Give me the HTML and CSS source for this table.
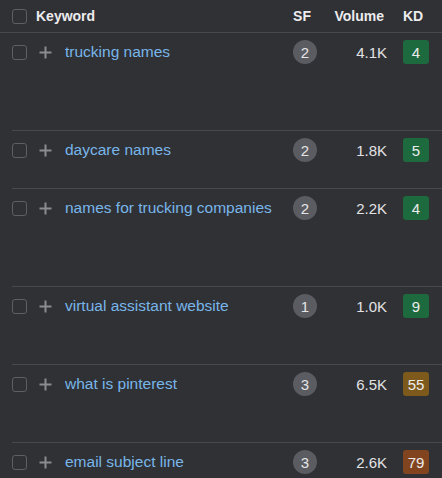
FILE: index.html
```html
<!DOCTYPE html>
<html lang="en">
<head>
<meta charset="utf-8">
<link rel="stylesheet" href="styles.css">
</head>
<body>
<div class="table">
  <div class="head">
    <span class="cb"></span>
    <span class="h-kw">Keyword</span>
    <span class="h-sf">SF</span>
    <span class="h-vol">Volume</span>
    <span class="h-kd">KD</span>
  </div>

  <div class="row row--first">
    <span class="cb"></span>
    <svg class="plus" viewBox="0 0 13 13"><path d="M6.5 0.5v12M0.5 6.5h12"/></svg>
    <a class="kw">trucking names</a>
    <span class="sf">2</span>
    <span class="vol">4.1K</span>
    <span class="kd kd--easy">4</span>
  </div>

  <div class="row row--short">
    <span class="cb"></span>
    <svg class="plus" viewBox="0 0 13 13"><path d="M6.5 0.5v12M0.5 6.5h12"/></svg>
    <a class="kw">daycare names</a>
    <span class="sf">2</span>
    <span class="vol">1.8K</span>
    <span class="kd kd--easy">5</span>
  </div>

  <div class="row row--tall">
    <span class="cb"></span>
    <svg class="plus" viewBox="0 0 13 13"><path d="M6.5 0.5v12M0.5 6.5h12"/></svg>
    <a class="kw">names for trucking companies</a>
    <span class="sf">2</span>
    <span class="vol">2.2K</span>
    <span class="kd kd--easy">4</span>
  </div>

  <div class="row row--mid">
    <span class="cb"></span>
    <svg class="plus" viewBox="0 0 13 13"><path d="M6.5 0.5v12M0.5 6.5h12"/></svg>
    <a class="kw">virtual assistant website</a>
    <span class="sf">1</span>
    <span class="vol">1.0K</span>
    <span class="kd kd--easy">9</span>
  </div>

  <div class="row row--mid">
    <span class="cb"></span>
    <svg class="plus" viewBox="0 0 13 13"><path d="M6.5 0.5v12M0.5 6.5h12"/></svg>
    <a class="kw">what is pinterest</a>
    <span class="sf">3</span>
    <span class="vol">6.5K</span>
    <span class="kd kd--hard">55</span>
  </div>

  <div class="row row--mid">
    <span class="cb"></span>
    <svg class="plus" viewBox="0 0 13 13"><path d="M6.5 0.5v12M0.5 6.5h12"/></svg>
    <a class="kw">email subject line</a>
    <span class="sf">3</span>
    <span class="vol">2.6K</span>
    <span class="kd kd--super">79</span>
  </div>
</div>
</body>
</html>
```

FILE: styles.css
```css
html, body {
  margin: 0;
  padding: 0;
  background: #303135;
  height: 100%;
  overflow: hidden;
}

body {
  font-family: "Liberation Sans", Arial, sans-serif;
  font-size: 15px;
  color: #e2e2e4;
}

.table {
  display: flex;
  flex-direction: column;
}

.head {
  display: grid;
  grid-template-columns: 15px 1fr 24px 58px 30px;
  column-gap: 12px;
  align-items: center;
  height: 32px;
  padding: 0 13px 0 12px;
  border-bottom: 1px solid #48494d;
  font-size: 14px;
  font-weight: bold;
  color: #ececee;
}

.h-kw {
  margin-left: -3px;
}

.h-sf {
  text-align: center;
  margin-left: -9px;
  margin-right: -3px;
}

.h-vol {
  text-align: right;
  margin-right: 3px;
}

.h-kd {
  justify-self: end;
  width: 26px;
  box-sizing: border-box;
}

.row {
  display: grid;
  grid-template-columns: 15px 13px 1fr 24px 58px 30px;
  column-gap: 12px;
  align-items: center;
  align-content: start;
  grid-auto-rows: 24px;
  margin-left: 12px;
  padding: 7px 13px 0 0;
  box-sizing: border-box;
  flex: none;
}

.row + .row {
  border-top: 1px solid #48494d;
}

.row--first { height: 97px; }
.row--tall { height: 98px; }
.row--short { height: 58px; }
.row--mid { height: 78px; }

.cb {
  width: 15px;
  height: 15px;
  box-sizing: border-box;
  border: 1px solid #5e5f64;
  border-radius: 3px;
  margin-top: 1px;
}

.head .cb {
  margin-top: 0;
}

.plus {
  width: 13px;
  height: 13px;
  stroke: #8b8c90;
  stroke-width: 2;
  fill: none;
}

.kw {
  color: #78b6ea;
  font-size: 15.5px;
  padding-left: 1px;
  white-space: nowrap;
  cursor: pointer;
}

.sf {
  width: 24px;
  height: 24px;
  border-radius: 50%;
  background: #5b5c61;
  color: #e4e4e6;
  display: flex;
  align-items: center;
  justify-content: center;
  font-size: 15px;
}

.vol {
  text-align: right;
  color: #e2e2e4;
}

.kd {
  justify-self: end;
  width: 26px;
  height: 24px;
  border-radius: 3px;
  display: flex;
  align-items: center;
  justify-content: center;
  color: #ececec;
  font-size: 15px;
}

.kd--easy { background: #1d6a3e; }
.kd--hard { background: #7d5a1b; }
.kd--super { background: #82441f; }
```
